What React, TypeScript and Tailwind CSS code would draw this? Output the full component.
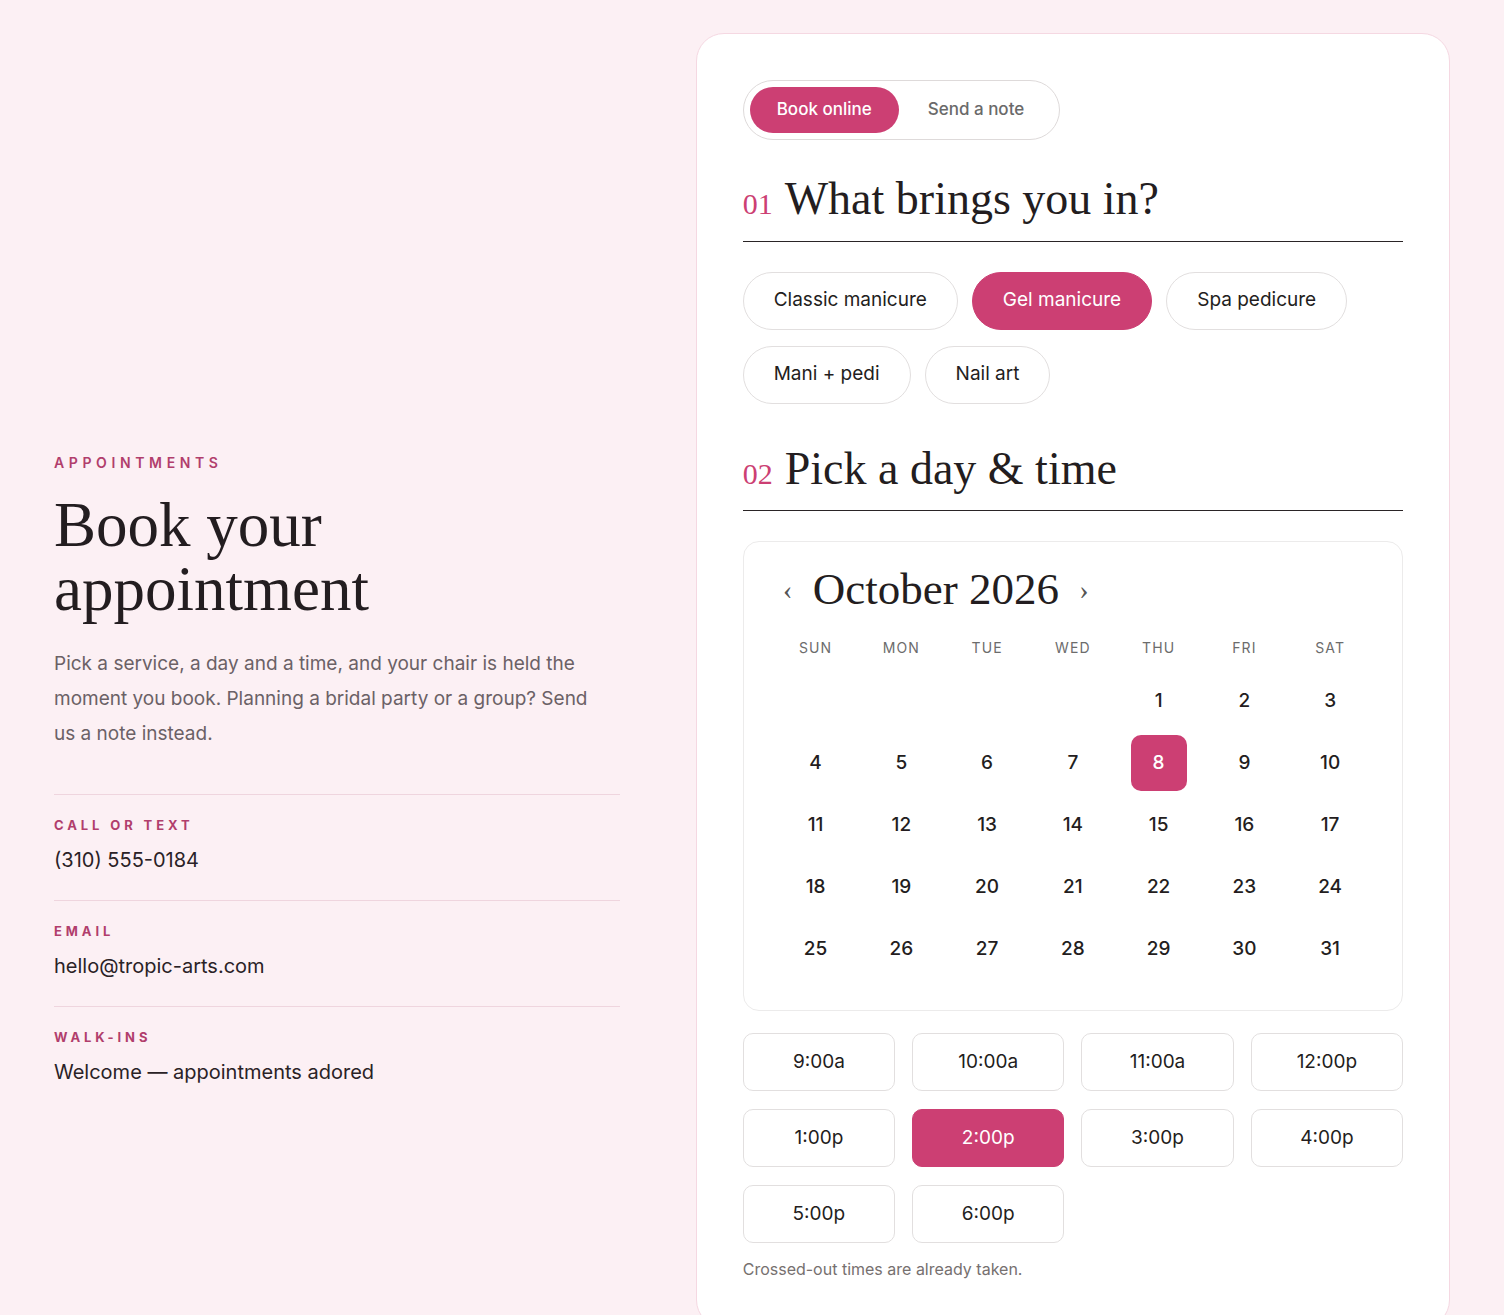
import { useState } from "react";

const SANS = "font-['Inter','Noto_Sans',sans-serif]";
const SERIF = "font-['Liberation_Serif','DejaVu_Serif',serif]";

const services = ["Classic manicure", "Gel manicure", "Spa pedicure", "Mani + pedi", "Nail art"];
const times = ["9:00a", "10:00a", "11:00a", "12:00p", "1:00p", "2:00p", "3:00p", "4:00p", "5:00p", "6:00p"];
const weekdays = ["SUN", "MON", "TUE", "WED", "THU", "FRI", "SAT"];

// October 2026 starts on a Thursday
const days: (number | null)[] = [null, null, null, null, ...Array.from({ length: 31 }, (_, i) => i + 1)];

const contacts = [
  { label: "CALL OR TEXT", value: "(310) 555-0184" },
  { label: "EMAIL", value: "hello@tropic-arts.com" },
  { label: "WALK-INS", value: "Welcome — appointments adored" },
];

function SectionTitle({ num, children }: { num: string; children: React.ReactNode }) {
  return (
    <div className="flex items-baseline gap-[12px] border-b-[1.5px] border-[#2a2426] pb-[13px]">
      <span className={`${SERIF} text-[30px] leading-none text-[#cc3f73]`}>{num}</span>
      <h2 className={`${SERIF} text-[46px] leading-[1.25] text-[#231d20]`}>{children}</h2>
    </div>
  );
}

export default function App() {
  const [tab, setTab] = useState("book");
  const [service, setService] = useState("Gel manicure");
  const [day, setDay] = useState(8);
  const [time, setTime] = useState("2:00p");

  return (
    <div className={`min-h-screen bg-[#fcf0f4] ${SANS}`}>
      <div className="grid grid-cols-[3fr_4fr] gap-[76px] px-[54px] pt-[33px]">
        {/* Left column */}
        <div className="pt-[421px]">
          <p className="text-[14px] font-semibold leading-[18px] tracking-[0.33em] text-[#b13e6c]">APPOINTMENTS</p>
          <h1 className={`${SERIF} mt-[21px] text-[63px] leading-[64px] text-[#231d20]`}>
            Book your
            <br />
            appointment
          </h1>
          <p className="mt-[25px] max-w-[548px] text-[19px] leading-[35px] text-[#6b6166]">
            Pick a service, a day and a time, and your chair is held the moment you book. Planning a bridal party or a
            group? Send us a note instead.
          </p>
          <div className="mt-[43px]">
            {contacts.map((c) => (
              <div key={c.label} className="border-t border-[#efd5de] pt-[22px] pb-[26px]">
                <p className="text-[13px] font-bold leading-[16px] tracking-[0.3em] text-[#b13e6c]">{c.label}</p>
                <p className="mt-[13px] text-[20px] leading-[28px] text-[#2a2226]">{c.value}</p>
              </div>
            ))}
          </div>
        </div>

        {/* Booking card */}
        <div className="rounded-[28px] border border-[#f5d8e2] bg-white px-[46px] pt-[46px] pb-[46px]">
          <div className="inline-flex rounded-full border border-[#dedada] p-[6px]">
            <button
              onClick={() => setTab("book")}
              className={`h-[46px] rounded-full px-[27px] text-[17px] font-medium ${
                tab === "book" ? "bg-[#cc3f73] text-white" : "text-[#6a6a6a]"
              }`}
            >
              Book online
            </button>
            <button
              onClick={() => setTab("note")}
              className={`h-[46px] rounded-full px-[29px] text-[17px] font-medium ${
                tab === "note" ? "bg-[#cc3f73] text-white" : "text-[#6a6a6a]"
              }`}
            >
              Send a note
            </button>
          </div>

          <div className="mt-[30px]">
            <SectionTitle num="01">What brings you in?</SectionTitle>
          </div>

          <div className="mt-[30px] flex flex-wrap gap-x-[14px] gap-y-[16px]">
            {services.map((s) => (
              <button
                key={s}
                onClick={() => setService(s)}
                className={`h-[58px] rounded-full px-[30px] text-[19px] ${
                  service === s
                    ? "border-[1.5px] border-[#cc3f73] bg-[#cc3f73] text-white"
                    : "border-[1.5px] border-[#e2dfdf] bg-white text-[#231d20]"
                }`}
              >
                {s}
              </button>
            ))}
          </div>

          <div className="mt-[36px]">
            <SectionTitle num="02">Pick a day &amp; time</SectionTitle>
          </div>

          {/* Calendar */}
          <div className="mt-[30px] rounded-[16px] border border-[#ecebeb] px-[29px] pt-[21px] pb-[33px]">
            <div className="flex items-center gap-[10px]">
              <button className={`${SERIF} w-[30px] text-[28px] leading-none text-[#555]`}>‹</button>
              <span className={`${SERIF} text-[45px] leading-[53px] text-[#231d20]`}>October 2026</span>
              <button className={`${SERIF} w-[30px] text-[28px] leading-none text-[#555]`}>›</button>
            </div>
            <div className="mt-[24px] grid grid-cols-7">
              {weekdays.map((w) => (
                <span key={w} className="text-center text-[14px] leading-[16px] tracking-[0.08em] text-[#6c6c6c]">
                  {w}
                </span>
              ))}
            </div>
            <div className="mt-[17px] grid grid-cols-7 gap-y-[6px]">
              {days.map((d, i) => (
                <div key={i} className="flex justify-center">
                  {d ? (
                    <button
                      onClick={() => setDay(d)}
                      className={`flex h-[56px] w-[56px] items-center justify-center rounded-[10px] text-[19px] font-medium ${
                        day === d ? "bg-[#cc3f73] text-white" : "text-[#231d20]"
                      }`}
                    >
                      {d}
                    </button>
                  ) : (
                    <span className="h-[56px] w-[56px]" />
                  )}
                </div>
              ))}
            </div>
          </div>

          {/* Times */}
          <div className="mt-[22px] grid grid-cols-4 gap-x-[17px] gap-y-[18px]">
            {times.map((t) => (
              <button
                key={t}
                onClick={() => setTime(t)}
                className={`h-[58px] rounded-[10px] text-[19px] ${
                  time === t
                    ? "border-[1.5px] border-[#cc3f73] bg-[#cc3f73] text-white"
                    : "border-[1.5px] border-[#e2dfdf] bg-white text-[#231d20]"
                }`}
              >
                {t}
              </button>
            ))}
          </div>

          <p className="mt-[14px] text-[16px] leading-[24px] text-[#76706f]">Crossed-out times are already taken.</p>
        </div>
      </div>
    </div>
  );
}
